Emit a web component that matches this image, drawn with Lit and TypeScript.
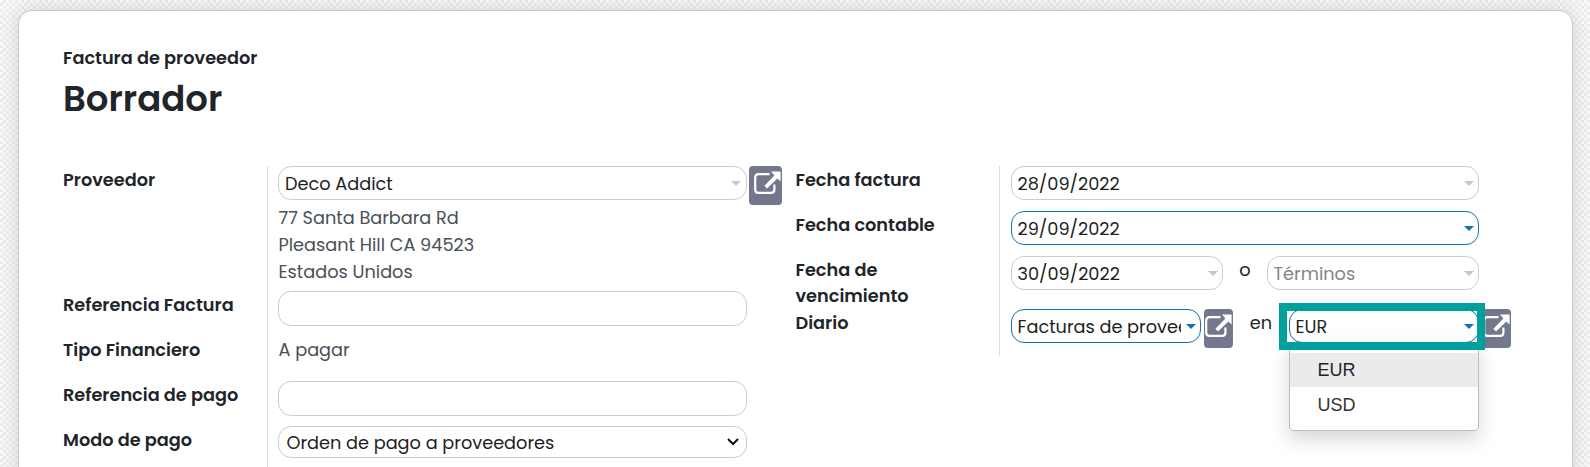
import { LitElement, html, css, svg } from "lit";
import { customElement, property } from "lit/decorators.js";

@customElement("ext-button")
class ExtButton extends LitElement {
  static styles = css`
    :host { display: block; box-sizing: border-box; height: 39px; border-radius: 4px; background: #74788d; overflow: hidden; flex: none; }
    svg { display: block; width: 100%; height: 39px; }
  `;
  @property({ type: Number }) inset = 5;
  render() {
    return html`<svg>
      <g transform="translate(${this.inset} 5)" fill="none">
        ${svg`<path d="M15.5 3.2H4.6Q1.2 3.2 1.2 6.6V18.4Q1.2 21.8 4.6 21.8H17Q20.4 21.8 20.4 18.4V13.6" stroke="#fff" stroke-width="2.2"/>
        <path d="M17 0.6H26.6V10.4L23.4 7.4L13 17.4L10.4 14.8L20.4 4.4Z" fill="#fff"/>`}
      </g>
    </svg>`;
  }
}

@customElement("drop-field")
class DropField extends LitElement {
  static styles = css`
    :host { display: flex; align-items: center; box-sizing: border-box; height: 34px; border: 1px solid #ccc; border-radius: 13px; background: #fff; padding: 0 4px 0 5.5px; color: #1d1f22; --arrow: #c8c8c8; min-width: 0; }
    :host([required]) { border-color: #0f75ad; --arrow: #0f75ad; }
    .value { flex: 1; min-width: 0; overflow: hidden; white-space: nowrap; padding-top: 1px; }
    .arrow { width: 0; height: 0; border: 5px solid transparent; border-top-color: var(--arrow); border-bottom: 0; flex: none; margin-left: 5px; }
  `;
  render() {
    return html`<span class="value"><slot></slot></span><span class="arrow"></span>`;
  }
}

@customElement("app-root")
class AppRoot extends LitElement {
  static styles = css`
    :host {
      display: block; box-sizing: border-box; height: 467px; overflow: hidden; padding: 10px 17px 0 18px;
      font: 400 17.72px/27px Poppins, Inter, "Open Sans", sans-serif;
      color: #212529; background: repeating-conic-gradient(#ededed 0 25%, #f9f9f9 0 50%) 0 0 / 6px 6px;
    }
    .sheet { box-sizing: border-box; height: 520px; background: #fff; border: 1px solid #c8c8d3; border-radius: 14px; box-shadow: 0 0 20px rgba(0,0,0,.14); padding: 33px 44px; }
    .kind { font-weight: 600; }
    .title { font-weight: 600; font-size: 35.5px; line-height: 54px; margin: 0; padding-top: 1px; }
    .groups { display: grid; grid-template-columns: 733px 1fr; align-items: start; padding-top: 40px; }
    .row { display: grid; min-height: 45px; align-items: start; }
    .row > .label { font-weight: 600; }
    .cell { border-left: 1px solid #dcdcdc; padding-left: 10px; align-self: stretch; }
    .left .row { grid-template-columns: 204px 1fr; }
    .right { margin-left: -0.5px; }
    .right .row { grid-template-columns: 203.5px 1fr; }
    .right .cell { padding-left: 11px; }
    .right .due { min-height: 53px; }
    .right .last { min-height: 47px; }
    .right .label { line-height: 26.5px; padding-top: 0.5px; margin-bottom: -1px; width: 150px; }
    .line { display: flex; align-items: flex-start; }
    .w469 { width: 469px; }
    .line .w469 { padding-right: 5px; padding-left: 6px; }
    .w468 { width: 468px; }
    .w212 { width: 212px; }
    .w190 { width: 190px; }
    .partner { margin-left: 2px; width: 33px; }
    .small { margin-left: 3px; width: 29px; }
    .address { color: #495057; margin-top: -1px; padding: 0 0 6px 0.5px; line-height: 27px; }
    .muted { color: #495057; padding-left: 0.5px; }
    .hint { color: #858585; }
    .box { box-sizing: border-box; width: 469px; height: 35px; border: 1px solid #ccc; border-radius: 13px; }
    .select { height: 32px; display: flex; align-items: center; justify-content: space-between; padding: 0 6px 0 7.5px; color: #1d1f22; }
    .joiner { width: 44px; text-align: center; }
    .joiner.in { width: 56px; }
    .currency { position: relative; }
    .highlight { position: absolute; left: -10px; top: -6px; width: 206px; height: 47px; box-sizing: border-box; border: 8px solid #00a09d; z-index: 2; }
    .menu { position: absolute; left: 0; top: 34px; box-sizing: border-box; width: 190px; height: 88px; border: 1px solid #bfbfbf; border-radius: 0 0 4px 4px; background: #fff; padding-top: 9px; box-shadow: 0 8px 20px rgba(0,0,0,.17); z-index: 1; font: 18px/35px "Liberation Sans", sans-serif; color: #333; }
    .option { padding-left: 27.5px; height: 35px; }
    .option.active { background: #ebebeb; height: 34px; margin-bottom: 1px; color: #212529; }
  `;
  row(label: string, content: unknown, cls = "") {
    return html`<div class="row ${cls}"><div class="label">${label}</div><div class="cell">${content}</div></div>`;
  }
  render() {
    return html`<main class="sheet">
      <div class="kind">Factura de proveedor</div>
      <h1 class="title">Borrador</h1>
      <div class="groups">
        <section class="left">
          ${this.row("Proveedor", html`
            <div class="line"><drop-field class="w469">Deco Addict</drop-field><ext-button class="partner"></ext-button></div>
            <div class="address">77 Santa Barbara Rd<br />Pleasant Hill CA 94523<br />Estados Unidos</div>`)}
          ${this.row("Referencia Factura", html`<div class="box"></div>`)}
          ${this.row("Tipo Financiero", html`<div class="muted">A pagar</div>`)}
          ${this.row("Referencia de pago", html`<div class="box"></div>`)}
          ${this.row("Modo de pago", html`<div class="box select"><span>Orden de pago a proveedores</span>
            <svg width="14" height="10" viewBox="0 0 14 10"><path d="M2 2L7 7L12 2" fill="none" stroke="#111" stroke-width="2" /></svg></div>`)}
        </section>
        <section class="right">
          ${this.row("Fecha factura", html`<drop-field class="w468">28/09/2022</drop-field>`)}
          ${this.row("Fecha contable", html`<drop-field class="w468" required>29/09/2022</drop-field>`)}
          ${this.row("Fecha de vencimiento", html`<div class="line">
            <drop-field class="w212">30/09/2022</drop-field><span class="joiner">o</span>
            <drop-field class="w212"><span class="hint">Términos</span></drop-field></div>`, "due")}
          ${this.row("Diario", html`<div class="line">
            <drop-field class="w190" required>Facturas de proveedores</drop-field><ext-button class="small" .inset=${1}></ext-button>
            <span class="joiner in">en</span>
            <div class="currency"><drop-field class="w190" required>EUR</drop-field>
              <div class="menu"><div class="option active">EUR</div><div class="option">USD</div></div>
              <div class="highlight"></div></div>
            <ext-button class="small" .inset=${1}></ext-button></div>`, "last")}
        </section>
      </div>
    </main>`;
  }
}
